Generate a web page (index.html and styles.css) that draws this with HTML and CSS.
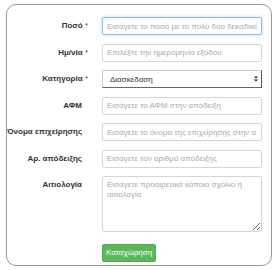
FILE: index.html
```html
<!DOCTYPE html>
<html lang="el">
<head>
    <meta charset="UTF-8">
    <meta name="viewport" content="width=device-width, initial-scale=1.0">
    <title>Καταχώρηση εξόδου</title>
    <link rel="stylesheet" href="styles.css">
</head>
<body>

<div class="card">
    <form class="expense-form">
        <label for="amount">Ποσό <span class="req">*</span></label>
        <input type="text" class="form-control focused" id="amount" placeholder="Εισάγετε το ποσό με το πολύ δύο δεκαδικά">

        <label for="date">Ημ/νία <span class="req">*</span></label>
        <input type="text" class="form-control" id="date" placeholder="Επιλέξτε την ημερομηνία εξόδου">

        <label for="category">Κατηγορία <span class="req">*</span></label>
        <div class="select-wrap">
            <select class="form-control" id="category">
                <option>Διασκέδαση</option>
                <option>Φαγητό</option>
                <option>Μεταφορές</option>
            </select>
            <svg class="select-arrow" width="4" height="6" viewBox="0 0 4 6"><path d="M0 0.5h4L2 2.5z M0 3.5h4L2 5.5z" fill="#111"/></svg>
        </div>

        <label for="afm">ΑΦΜ</label>
        <input type="text" class="form-control" id="afm" placeholder="Εισάγετε το ΑΦΜ στην απόδειξη">

        <label for="business">Όνομα επιχείρησης</label>
        <input type="text" class="form-control" id="business" placeholder="Εισάγετε το όνομα της επιχείρησης στην απόδειξη">

        <label for="receipt">Αρ. απόδειξης</label>
        <input type="text" class="form-control" id="receipt" placeholder="Εισάγετε τον αριθμό απόδειξης">

        <label for="notes">Αιτιολογία</label>
        <textarea class="form-control notes" id="notes" placeholder="Εισάγετε προαιρετικά κάποιο σχόλιο ή αιτιολογία"></textarea>

        <div></div>
        <div class="actions">
            <button type="button" class="btn-success">Καταχώρηση</button>
        </div>
    </form>
</div>

</body>
</html>
```

FILE: styles.css
```css
body {
    margin: 0;
    font-family: "Liberation Sans", Arial, sans-serif;
    background-color: white;
    color: #333;
}
.card {
    width: 266px;
    height: 262px;
    margin: 4px 0 0 6px;
    border: 1px solid #999;
    border-radius: 10px;
    box-sizing: border-box;
    padding: 12px 9px 0 0;
}
.expense-form {
    display: grid;
    grid-template-columns: 75px 160px;
    column-gap: 20px;
    row-gap: 8.5px;
}
label {
    font-size: 8px;
    font-weight: bold;
    line-height: 18px;
    text-align: right;
    white-space: nowrap;
    color: #333;
}
.req {
    color: #d9534f;
    margin-right: -6px;
}
.form-control {
    display: block;
    width: 100%;
    height: 18px;
    padding: 0 4px;
    font-family: "Liberation Sans", Arial, sans-serif;
    font-size: 8px;
    color: #555;
    background-color: white;
    border: 1px solid #d6d6d6;
    border-radius: 2px;
    box-sizing: border-box;
    outline: none;
}
.form-control::placeholder {
    color: #aaa;
}
.focused {
    border-color: #8fc0ea;
    box-shadow: 0 0 3px rgba(102, 175, 233, 0.6);
}
.select-wrap {
    position: relative;
}
select.form-control {
    appearance: none;
    -webkit-appearance: none;
    padding-left: 7px;
    border-color: #ccc #555 #666 #ccc;
    border-radius: 0;
    color: #333;
}
.select-arrow {
    position: absolute;
    right: 4px;
    top: 6px;
}
.notes {
    height: 56px;
    padding: 3px 4px;
    line-height: 9.5px;
    resize: vertical;
}
.actions {
    margin-top: 0.5px;
}
.btn-success {
    width: 54px;
    height: 18px;
    padding: 0;
    font-family: "Liberation Sans", Arial, sans-serif;
    font-size: 8px;
    color: white;
    background-color: #5cb85c;
    border: 1px solid #4cae4c;
    border-radius: 2px;
    cursor: pointer;
}
.btn-success:hover {
    background-color: #449d44;
}
```
